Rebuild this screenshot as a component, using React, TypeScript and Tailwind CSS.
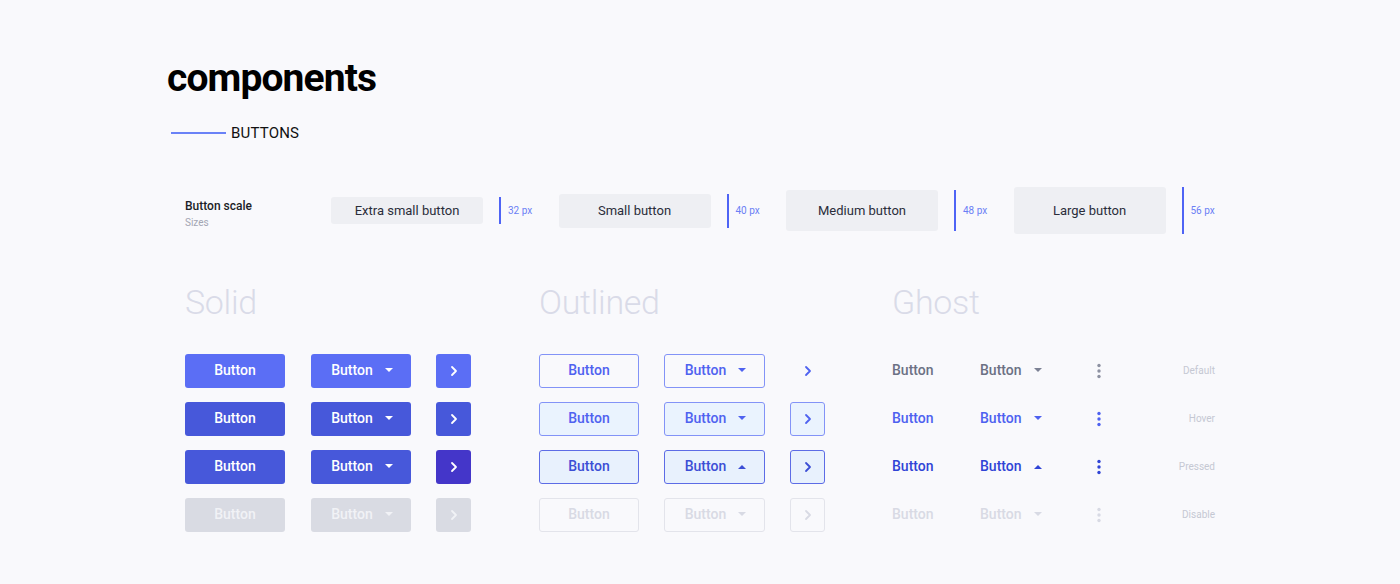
import type { ReactNode } from 'react'

const font = { fontFamily: 'Roboto, "Noto Sans", sans-serif' }

const sizes = [
  { label: 'Extra small button', h: 'h-[27px]', px: '32 px' },
  { label: 'Small button', h: 'h-[34px]', px: '40 px' },
  { label: 'Medium button', h: 'h-[41px]', px: '48 px' },
  { label: 'Large button', h: 'h-[47px]', px: '56 px' },
]

function Caret({ up = false, className = '' }: { up?: boolean; className?: string }) {
  return (
    <svg width="8" height="5" viewBox="0 0 8 5" className={className} fill="currentColor">
      {up ? <path d="M0 5L4 1L8 5Z" /> : <path d="M0 0L8 0L4 4Z" />}
    </svg>
  )
}

function Chevron({ className = '' }: { className?: string }) {
  return (
    <svg width="8" height="12" viewBox="0 0 8 12" className={className} fill="none" stroke="currentColor">
      <path d="M2 2l4 4-4 4" strokeWidth={1.8} strokeLinecap="round" strokeLinejoin="round" />
    </svg>
  )
}

function Kebab({ className = '' }: { className?: string }) {
  return (
    <svg width="4" height="16" viewBox="0 0 4 16" className={className} fill="currentColor">
      <circle cx="2" cy="2.5" r="1.7" />
      <circle cx="2" cy="8" r="1.7" />
      <circle cx="2" cy="13.5" r="1.7" />
    </svg>
  )
}

function Row({ children }: { children: ReactNode }) {
  return <div className="flex items-center h-[34px]">{children}</div>
}

const solid = [
  { btn: 'bg-[#5b6ef5] text-white', icon: 'bg-[#5b6ef5] text-white', up: false },
  { btn: 'bg-[#4758da] text-white', icon: 'bg-[#4758da] text-white', up: false },
  { btn: 'bg-[#4758da] text-white', icon: 'bg-[#4436c9] text-white', up: false },
  { btn: 'bg-[#d9dbe3] text-[#f1f2f6]', icon: 'bg-[#d9dbe3] text-[#f1f2f6]', up: false },
]

const outlined = [
  { btn: 'border-[#8393f7] text-[#4f62f0] bg-transparent', icon: 'border-transparent text-[#4f62f0]', up: false },
  { btn: 'border-[#8393f7] text-[#4f62f0] bg-[#eaf3fe]', icon: 'border-[#8393f7] text-[#4f62f0] bg-[#eaf3fe]', up: false },
  { btn: 'border-[#5d6ce6] text-[#3c4ed5] bg-[#e8f1fd]', icon: 'border-[#5d6ce6] text-[#3c4ed5] bg-[#e8f1fd]', up: true },
  { btn: 'border-[#e3e4eb] text-[#d8dae4] bg-transparent', icon: 'border-[#e3e4eb] text-[#d8dae4]', up: false },
]

const ghost = [
  { text: 'text-[#6c7184]', caret: 'text-[#7c8194]', dots: 'text-[#8d91a1]', up: false, state: 'Default' },
  { text: 'text-[#4e61f0]', caret: 'text-[#4e61f0]', dots: 'text-[#4e61f0]', up: false, state: 'Hover' },
  { text: 'text-[#3044d6]', caret: 'text-[#3044d6]', dots: 'text-[#3044d6]', up: true, state: 'Pressed' },
  { text: 'text-[#d8dae4]', caret: 'text-[#d8dae4]', dots: 'text-[#d8dae4]', up: false, state: 'Disable' },
]

export default function App() {
  return (
    <div className="min-h-screen w-[1400px] h-[584px] bg-[#f9f9fc] overflow-hidden" style={font}>
      <div className="pl-[167px] pt-[54px]">
        <h1 className="text-[39px] leading-[48px] font-bold text-black tracking-[-0.9px]">components</h1>
        <div className="flex items-center mt-[20px] ml-[4px]">
          <div className="w-[55px] h-[2px] bg-[#6a82f7]" />
          <span className="ml-[5px] text-[15px] text-[#111] tracking-[0.2px]">BUTTONS</span>
        </div>
      </div>

      {/* Button scale */}
      <div className="flex items-center pl-[185px] mt-[41px] h-[50px]">
        <div className="w-[146px] mt-[8px]">
          <div className="text-[12px] font-medium text-[#1b1d26] leading-[15px]">Button scale</div>
          <div className="text-[10px] text-[#a3a6b3] leading-[14px] mt-[2px]">Sizes</div>
        </div>
        {sizes.map((s) => (
          <div key={s.px} className="w-[227.5px] flex items-center">
            <div className={`w-[152px] ${s.h} rounded-[3px] bg-[#eeeff3] flex items-center justify-center text-[13px] text-[#2a2d3a]`}>
              {s.label}
            </div>
            <div className={`ml-[16px] w-[2px] ${s.h} bg-[#4f64f5]`} />
            <span className="ml-[7px] text-[10px] text-[#6b7ff5]">{s.px}</span>
          </div>
        ))}
      </div>

      {/* Variants */}
      <div className="flex pl-[185px] mt-[46px]">
        <div className="w-[354px]">
          <h2 className="text-[34px] leading-[40px] font-light text-[#d9dbe8] tracking-[-0.3px]">Solid</h2>
          <div className="mt-[32px] flex flex-col gap-[14px]">
            {solid.map((r, i) => (
              <Row key={i}>
                <div className={`w-[100px] h-[34px] rounded-[3px] flex items-center justify-center text-[14px] font-medium ${r.btn}`}>Button</div>
                <div className={`ml-[26px] w-[100px] h-[34px] rounded-[3px] flex items-center justify-center gap-[12px] text-[14px] font-medium ${r.btn}`}>
                  <span className="ml-[2px]">Button</span>
                  <Caret up={r.up} />
                </div>
                <div className={`ml-[25px] w-[35px] h-[34px] rounded-[3px] flex items-center justify-center ${r.icon}`}>
                  <Chevron />
                </div>
              </Row>
            ))}
          </div>
        </div>

        <div className="w-[353px]">
          <h2 className="text-[34px] leading-[40px] font-light text-[#d9dbe8] tracking-[-0.3px]">Outlined</h2>
          <div className="mt-[32px] flex flex-col gap-[14px]">
            {outlined.map((r, i) => (
              <Row key={i}>
                <div className={`w-[100px] h-[34px] rounded-[3px] border flex items-center justify-center text-[14px] font-medium ${r.btn}`}>Button</div>
                <div className={`ml-[25px] w-[101px] h-[34px] rounded-[3px] border flex items-center justify-center gap-[12px] text-[14px] font-medium ${r.btn}`}>
                  <span className="ml-[2px]">Button</span>
                  <Caret up={r.up} />
                </div>
                <div className={`ml-[25px] w-[35px] h-[34px] rounded-[3px] border flex items-center justify-center ${r.icon}`}>
                  <Chevron />
                </div>
              </Row>
            ))}
          </div>
        </div>

        <div className="w-[323px]">
          <h2 className="text-[34px] leading-[40px] font-light text-[#d9dbe8] tracking-[-0.3px]">Ghost</h2>
          <div className="mt-[32px] flex flex-col gap-[14px]">
            {ghost.map((r, i) => (
              <Row key={i}>
                <span className={`w-[88px] text-[14px] font-medium ${r.text}`}>Button</span>
                <span className={`text-[14px] font-medium ${r.text}`}>Button</span>
                <Caret up={r.up} className={`ml-[12px] ${r.caret}`} />
                <Kebab className={`ml-[55px] ${r.dots}`} />
                <span className="ml-auto text-[10px] text-[#c5c8d3]">{r.state}</span>
              </Row>
            ))}
          </div>
        </div>
      </div>
    </div>
  )
}
